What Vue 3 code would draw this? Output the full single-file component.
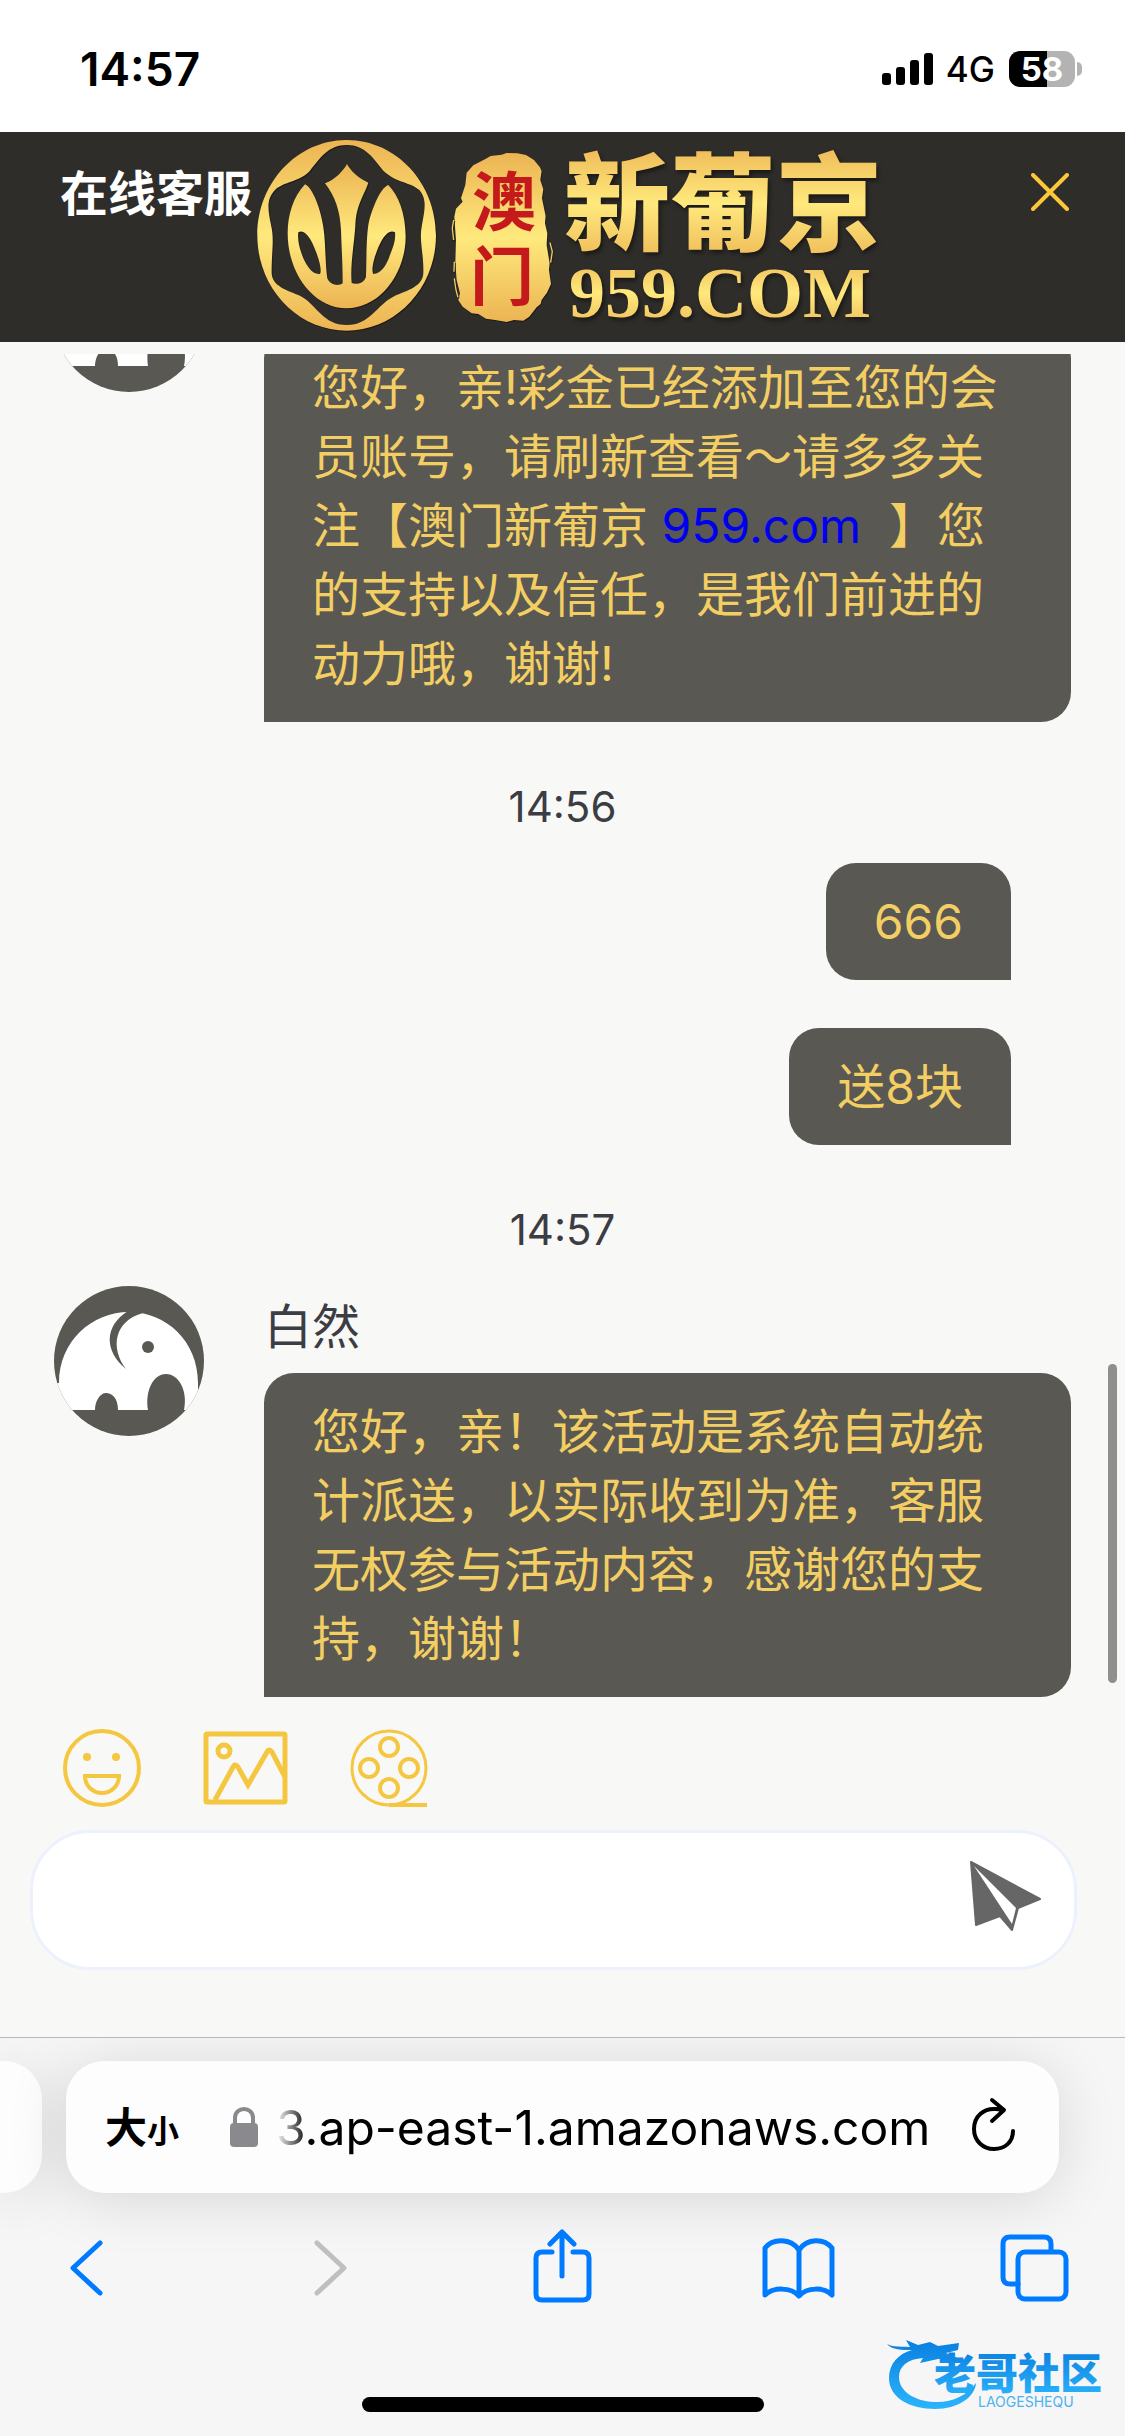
<script setup>
import { ref, onMounted } from 'vue'

const draft = ref('')
const list = ref(null)

const messages = ref([
  {
    id: 1,
    from: 'agent',
    name: '',
    parts: [
      { text: '您好，亲!彩金已经添加至您的会员账号，请刷新查看～请多多关注【澳门新葡京 ' },
      { text: '959.com', href: 'https://959.com' },
      { text: '】您的支持以及信任，是我们前进的动力哦，谢谢!' }
    ]
  },
  { id: 2, from: 'time', parts: [{ text: '14:56' }] },
  { id: 3, from: 'me', parts: [{ text: '666' }] },
  { id: 4, from: 'me', parts: [{ text: '送8块' }] },
  { id: 5, from: 'time', parts: [{ text: '14:57' }] },
  {
    id: 6,
    from: 'agent',
    name: '白然',
    parts: [{ text: '您好，亲！该活动是系统自动统计派送，以实际收到为准，客服无权参与活动内容，感谢您的支持，谢谢！' }]
  }
])

function scrollToEnd() {
  list.value.scrollTop = list.value.scrollHeight
}

function send() {
  const text = draft.value.trim()
  if (!text) return
  messages.value.push({ id: Date.now(), from: 'me', parts: [{ text }] })
  draft.value = ''
  requestAnimationFrame(scrollToEnd)
}

onMounted(scrollToEnd)
</script>

<template>
  <div class="screen" lang="zh-CN">
    <div class="status">
      <span class="clock">14:57</span>
      <div class="status-right">
        <svg class="signal" viewBox="0 0 51 32">
          <rect x="0" y="20" width="9" height="12" rx="3" />
          <rect x="14" y="14" width="9" height="18" rx="3" />
          <rect x="28" y="7" width="9" height="25" rx="3" />
          <rect x="42" y="0" width="9" height="32" rx="3" />
        </svg>
        <span class="network">4G</span>
        <span class="battery">58</span>
      </div>
    </div>

    <header class="header">
      <h1 class="title">在线客服</h1>
      <svg class="logo" viewBox="0 0 640 210" role="img" aria-label="澳门新葡京 959.COM">
        <defs>
          <linearGradient id="gold" x1="0" y1="0" x2="0" y2="1">
            <stop offset="0" stop-color="#ecb453" />
            <stop offset="0.5" stop-color="#ffe97d" />
            <stop offset="1" stop-color="#ecb453" />
          </linearGradient>
        </defs>
        <g transform="translate(-12 -2) scale(0.3333)">
          <path
            fill="url(#gold)"
            fill-rule="evenodd"
            d="M320 30C468 30 588 158 588 316C588 474 468 602 320 602C172 602 52 474 52 316C52 158 172 30 320 30Z
               M320 45C265 45 240 85 210 122C180 155 130 155 105 180C78 208 84 240 93 285C104 330 94 370 95 430C97 470 140 480 185 500C230 525 250 585 320 585C390 585 410 525 460 500C505 480 548 470 550 430C552 370 536 330 546 285C554 240 562 208 538 180C510 155 470 160 430 122C400 85 375 45 320 45Z"
          />
          <path
            fill="url(#gold)"
            fill-rule="evenodd"
            d="M195 163C160 200 143 255 143 310C143 430 220 535 320 535C420 535 497 430 497 320C497 250 475 195 445 165C420 175 400 230 388 270C378 310 380 400 378 440C372 462 345 465 335 458C330 400 345 330 347 270C352 220 375 190 385 158C355 145 330 120 321 102C312 120 285 150 255 160C285 200 300 240 303 300C305 360 308 400 308 460C295 470 270 465 262 445C255 400 258 330 248 280C240 230 215 170 195 163Z
               M175 307C195 295 215 330 228 365C245 410 243 425 240 432C215 435 200 405 190 385C178 355 172 330 175 307Z
               M465 307C445 295 425 325 410 365C397 400 395 425 400 432C425 430 440 405 450 375C460 350 468 330 465 307Z"
          />
          <path
            fill="url(#gold)"
            d="M735 88L752 78L785 74L800 69L832 70L858 75L882 90L900 112L905 124L901 150L910 178L906 205L917 258L915 280L922 310L920 345L929 400L927 420L933 462L921 488L905 510L902 522L890 532L868 560L850 572L822 570L800 576L765 570L738 566L715 552L695 550L668 530L655 510L660 490L650 450L646 400L648 330L643 260L648 236L668 215L663 205L676 165L680 128L700 106Z"
          />
          <path
            fill="none"
            stroke="#f3cb66"
            stroke-width="4"
            d="M641 270L637 295L641 330M643 395L642 425M643 445L648 480L654 502M930 338L937 365L932 398"
          />
        </g>
        <text class="seal" x="220" y="93">澳</text>
        <text class="seal" x="218" y="168">门</text>
        <text class="brand" x="312" y="110" fill="url(#gold)">新葡京</text>
        <text class="domain" x="317" y="185" fill="url(#gold)">959.COM</text>
      </svg>
      <button class="close" type="button" aria-label="关闭">
        <svg viewBox="0 0 38 38"><path d="M2 2L36 36M36 2L2 36" /></svg>
      </button>
    </header>

    <main class="chat">
      <div ref="list" class="messages">
        <template v-for="m in messages" :key="m.id">
          <p v-if="m.from === 'time'" class="time">{{ m.parts[0].text }}</p>
          <div v-else-if="m.from === 'me'" class="row mine">
            <p class="bubble">{{ m.parts[0].text }}</p>
          </div>
          <div v-else class="row">
            <svg class="avatar" viewBox="0 0 150 150">
              <rect width="150" height="150" fill="#595853" />
              <path
                fill="#fff"
                d="M5 97C5 55 38 26 75 26C112 26 144 55 144 97V124H130C134 105 125 88 112 88C99 88 91 105 94 124H64C64 112 58 107 52 107C46 107 41 115 41 124H0V97Z"
              />
              <path fill="#595853" d="M74 25C50 40 50 65 72 83C56 62 60 35 89 27L84 20Z" />
              <circle cx="94" cy="61" r="6" fill="#595853" />
            </svg>
            <div class="body">
              <p class="name">{{ m.name }}</p>
              <p class="bubble">
                <template v-for="(p, i) in m.parts" :key="i"><a v-if="p.href" :href="p.href">{{ p.text }}</a><template v-else>{{ p.text }}</template></template>
              </p>
            </div>
          </div>
        </template>
      </div>
      <div class="scrollbar"></div>
    </main>

    <form class="composer" @submit.prevent="send">
      <div class="tools">
        <button type="button" aria-label="表情">
          <svg class="tool" viewBox="0 0 78 78" width="78" height="78">
            <circle cx="39" cy="39" r="37" />
            <circle class="dot" cx="24" cy="28" r="4" />
            <circle class="dot" cx="53" cy="28" r="4" />
            <path d="M22 47H56C56 57 48 64 39 64C30 64 22 57 22 47Z" />
          </svg>
        </button>
        <button type="button" aria-label="图片">
          <svg class="tool thick" viewBox="0 0 85 74" width="85" height="74">
            <rect x="3" y="3" width="79" height="68" rx="1" />
            <circle cx="21" cy="20" r="6" />
            <path d="M12 69L30 36Q32 32 35 36L45 54L64 21Q66 17 69 21L82 46" />
          </svg>
        </button>
        <button type="button" aria-label="视频">
          <svg class="tool" viewBox="0 0 78 78" width="78" height="78">
            <circle class="rim" cx="39" cy="39" r="37" />
            <circle cx="39" cy="18" r="9" />
            <circle cx="19" cy="39" r="9" />
            <circle cx="59" cy="39" r="9" />
            <circle cx="39" cy="59" r="9" />
            <path d="M39 76H77" />
          </svg>
        </button>
      </div>
      <div class="field">
        <input v-model="draft" type="text" aria-label="输入消息" />
        <button type="submit" aria-label="发送">
          <svg viewBox="0 0 72 71" width="72" height="71">
            <path
              fill="#666"
              stroke="#666"
              stroke-width="2"
              stroke-linejoin="round"
              d="M1 1L6 64L30 55L42 69L48 47L70 38Z"
            />
            <path fill="#fff" d="M4 5L46 47L42 63Z" />
          </svg>
        </button>
      </div>
    </form>

    <footer class="browser">
      <div class="tabs">
        <div class="tab previous"></div>
        <div class="tab">
          <button class="size" type="button"><span>大</span><small>小</small></button>
          <svg class="lock" viewBox="0 0 28 40">
            <rect x="0" y="16" width="28" height="24" rx="4" fill="#8a8a8e" />
            <path d="M5 18V11C5 -1 23 -1 23 11V18" fill="none" stroke="#8a8a8e" stroke-width="4" />
          </svg>
          <button class="url" type="button">3.ap-east-1.amazonaws.com</button>
          <button type="button" aria-label="刷新">
            <svg class="reload" viewBox="0 0 46 56">
              <path d="M42 34C42 45 34 52 23 52C12 52 3 44 3 32C3 19 13 11 25 12L33 13M21 3L33 13L21 24" />
            </svg>
          </button>
        </div>
      </div>
      <nav class="nav">
        <button type="button" aria-label="后退">
          <svg viewBox="0 0 76 76"><path d="M52 13L25 38L52 63" /></svg>
        </button>
        <button type="button" aria-label="前进" disabled>
          <svg viewBox="0 0 76 76"><path d="M32 13L59 38L32 63" /></svg>
        </button>
        <button type="button" aria-label="分享">
          <svg viewBox="0 0 76 76">
            <path d="M30 22H20Q14 22 14 28V64Q14 70 20 70H61Q67 70 67 64V28Q67 22 61 22H51M40 46V2M28 14L40 2L52 14" />
          </svg>
        </button>
        <button type="button" aria-label="书签">
          <svg viewBox="0 0 76 76">
            <path d="M40 20C32 8 14 8 6 18V65C14 57 32 57 40 66C48 57 65 57 73 65V18C65 8 48 8 40 20V65" />
          </svg>
        </button>
        <button type="button" aria-label="标签页">
          <svg viewBox="0 0 76 76">
            <path d="M22 54H14Q7 54 7 47V14Q7 7 14 7H48Q55 7 55 14V21" />
            <rect x="22" y="22" width="48" height="47" rx="7" />
          </svg>
        </button>
      </nav>
      <div class="home"></div>
      <svg class="watermark" viewBox="0 0 235 90" role="img" aria-label="老哥社区">
        <defs>
          <linearGradient id="sky" x1="0" y1="0" x2="0" y2="1">
            <stop offset="0" stop-color="#0a7fe0" />
            <stop offset="1" stop-color="#2bb5fc" />
          </linearGradient>
        </defs>
        <path
          fill="url(#sky)"
          d="M7 14C14 18 22 16 30 17L26 10L38 15L50 12L58 16L79 13L78 20L66 23L77 28L58 29L40 33L43 28C28 29 19 36 19 47C19 61 34 71 54 72C72 73 86 66 96 53C95 67 78 79 55 79C30 79 9 68 9 48C9 34 18 24 32 20C22 20 12 20 7 14Z"
        />
        <text class="mark" x="54" y="59" fill="url(#sky)">老哥社区</text>
        <text class="mark-latin" x="98" y="77">LAOGESHEQU</text>
      </svg>
    </footer>
  </div>
</template>

<style>
body {
  margin: 0;
  background: #f8f8f6;
}
</style>

<style scoped>
.screen {
  display: flex;
  flex-direction: column;
  height: 100vh;
  font-family: Inter, "Noto Sans CJK SC", sans-serif;
  font-size: 48px;
  line-height: 69px;
  color: #3c3c44;
  background: #f8f8f6;
}

p,
h1 {
  margin: 0;
}

button {
  display: flex;
  align-items: center;
  justify-content: center;
  padding: 0;
  border: 0;
  background: none;
  font: inherit;
  color: inherit;
}

svg {
  display: block;
  flex: none;
}

.status {
  display: flex;
  flex: none;
  align-items: center;
  justify-content: space-between;
  height: 132px;
  padding: 6px 43px 0 80px;
  box-sizing: border-box;
  background: #fff;
  color: #000;
}

.clock {
  font-size: 46px;
  font-weight: 600;
}

.status-right {
  display: flex;
  align-items: center;
}

.signal {
  width: 51px;
  height: 32px;
  margin-right: 13px;
}

.network {
  margin-right: 14px;
  font-size: 35px;
  font-weight: 500;
}

.battery {
  position: relative;
  width: 66px;
  height: 36px;
  margin-right: 7px;
  border-radius: 11px;
  background: linear-gradient(90deg, #000 58%, #b3b3b3 58%);
  color: #fff;
  font-size: 33px;
  font-weight: 700;
  line-height: 36px;
  text-align: center;
}

.battery::after {
  content: "";
  position: absolute;
  top: 11px;
  right: -7px;
  width: 5px;
  height: 14px;
  border-radius: 0 5px 5px 0;
  background: #b3b3b3;
}

.header {
  display: flex;
  flex: none;
  height: 210px;
  padding: 0 56px 0 60px;
  background: #2f2d2a;
}

.title {
  flex: none;
  padding-top: 27px;
  font-size: 48px;
  font-weight: 600;
  color: #fff;
}

.logo {
  width: 640px;
  height: 210px;
}

.logo path,
.brand,
.domain {
  filter: drop-shadow(2px 3px 2px #1a1815);
}

.brand {
  font-size: 106px;
  font-weight: 900;
}

.domain {
  font-family: "Liberation Serif", serif;
  font-size: 72px;
  font-weight: 700;
}

.seal {
  font-size: 64px;
  font-weight: 700;
  fill: #c41a1c;
}

.close {
  align-self: flex-start;
  margin: 41px 0 0 auto;
}

.close svg {
  width: 38px;
  height: 38px;
  fill: none;
  stroke: #fac83a;
  stroke-width: 4;
  stroke-linecap: round;
}

.chat {
  position: relative;
  display: flex;
  flex: 1;
  min-height: 0;
  margin-top: 12px;
}

.messages {
  flex: 1;
  padding: 0 54px;
  overflow-y: auto;
  scrollbar-width: none;
}

.scrollbar {
  position: absolute;
  right: 8px;
  bottom: 14px;
  width: 9px;
  height: 319px;
  border-radius: 5px;
  background: #8f8f8e;
}

.row {
  display: flex;
  gap: 60px;
}

.mine {
  justify-content: flex-end;
  padding-right: 60px;
}

.mine + .mine {
  margin-top: 48px;
}

.avatar {
  width: 150px;
  height: 150px;
  border-radius: 50%;
}

.body {
  flex: 1;
}

.name {
  min-height: 69px;
  padding: 6px 0 12px;
}

.bubble {
  padding: 24px 48px;
  border-radius: 30px 30px 30px 0;
  background: #595853;
  color: #f3ce63;
}

.mine .bubble {
  border-radius: 30px 30px 0 30px;
}

.bubble a {
  margin-right: 28px;
  color: #00e;
  text-decoration: none;
}

.time {
  padding: 50px 0 22px;
  font-size: 42px;
  text-align: center;
}

.composer {
  flex: none;
  padding: 32px 48px 67px 30px;
}

.tools {
  display: flex;
  align-items: center;
  gap: 62px;
  height: 78px;
  padding-left: 33px;
  margin-bottom: 23px;
}

.tool {
  fill: none;
  stroke: #f5c740;
  stroke-width: 4;
}

.thick {
  stroke-width: 5;
}

.tool .rim {
  stroke-width: 3;
}

.tool .dot {
  fill: #f5c740;
  stroke: none;
}

.field {
  display: flex;
  align-items: center;
  height: 140px;
  padding: 0 32px 0 48px;
  box-sizing: border-box;
  border: 3px solid #ecf1fd;
  border-radius: 60px;
  background: #fff;
}

.field input {
  flex: 1;
  min-width: 0;
  padding: 0;
  border: 0;
  outline: 0;
  background: none;
  font: inherit;
  color: inherit;
}

.field button {
  margin-bottom: 8px;
}

.browser {
  position: relative;
  flex: none;
  padding: 23px 0 24px;
  border-top: 1px solid #b8b8b8;
  background: #f6f6f6;
  color: #000;
  overflow: hidden;
}

.tabs {
  display: flex;
  gap: 24px;
  padding-right: 66px;
}

.tab {
  display: flex;
  flex: 1;
  align-items: center;
  height: 132px;
  padding: 0 42px 0 39px;
  box-sizing: border-box;
  border-radius: 38px;
  background: #fdfdfd;
  box-shadow: 0 6px 60px rgba(0, 0, 0, 0.13);
}

.previous {
  flex: 0 0 42px;
  padding: 0;
  border-radius: 0 38px 38px 0;
}

.size {
  align-items: baseline;
  margin-right: 51px;
  padding-top: 4px;
  font-size: 42px;
  font-weight: 600;
}

.size small {
  font-size: 32px;
}

.lock {
  width: 28px;
  height: 40px;
  margin-right: 18px;
}

.url {
  margin-right: auto;
  font-size: 48px;
  white-space: nowrap;
  mask-image: linear-gradient(90deg, transparent, #000 32px);
}

.reload {
  width: 46px;
  height: 56px;
  margin-bottom: 4px;
  fill: none;
  stroke: #000;
  stroke-width: 4;
  stroke-linecap: round;
  stroke-linejoin: round;
}

.nav {
  display: flex;
  align-items: center;
  justify-content: space-between;
  height: 150px;
  padding: 0 53px 0 48px;
}

.nav svg {
  width: 76px;
  height: 76px;
  fill: none;
  stroke: #007aff;
  stroke-width: 5;
  stroke-linecap: round;
  stroke-linejoin: round;
  overflow: visible;
}

.nav button:disabled svg {
  stroke: #bfbfbf;
}

.home {
  width: 402px;
  height: 15px;
  margin: 54px auto 0;
  border-radius: 8px;
  background: #000;
}

.watermark {
  position: absolute;
  right: 10px;
  bottom: 16px;
  width: 235px;
  height: 90px;
}

.mark {
  font-size: 42px;
  font-weight: 900;
}

.mark-latin {
  font-size: 14px;
  fill: #4bb2f0;
}
</style>
